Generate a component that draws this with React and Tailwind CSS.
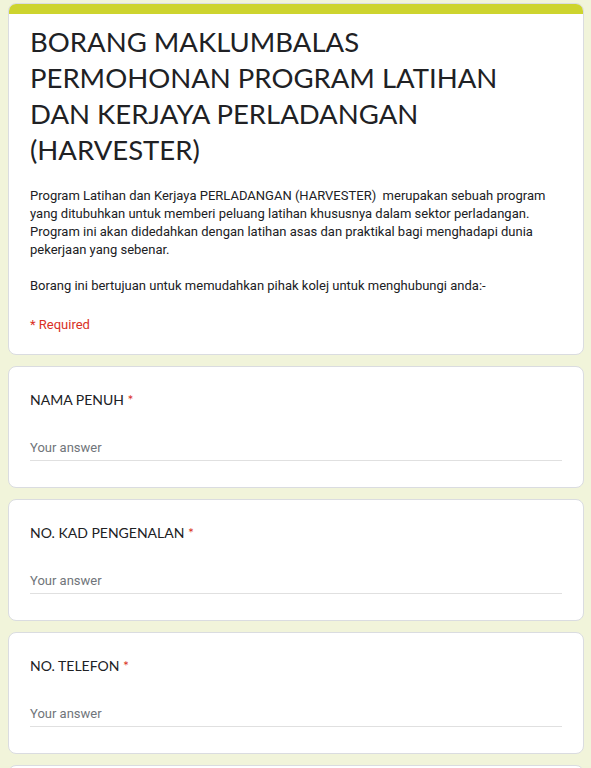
const questions = ["NAMA PENUH", "NO. KAD PENGENALAN", "NO. TELEFON", "ALAMAT"];

const QuestionCard = ({ title }) => (
    <div className="bg-white border border-[#dadce0] rounded-lg px-[21px] pt-[21px] pb-[26px]">
        <div className="text-[14px] leading-[24px] text-[#202124]" style={{ fontFamily: "Lato, 'Open Sans', sans-serif" }}>
            {title} <span className="text-[#d93025]">*</span>
        </div>
        <div className="mt-[26px] border-b border-[#e0e0e0] pb-[2px] text-[13px] leading-[20px] text-[#70757a]">
            Your answer
        </div>
    </div>
)

export default function App() {
    return <div className="min-h-screen bg-[#f1f4da] pl-2 pr-[7px] pt-[3px] flex flex-col gap-[11px]" style={{ fontFamily: "Roboto, 'Liberation Sans', sans-serif" }}>
        <div className="bg-white border border-[#dadce0] rounded-lg overflow-hidden">
            <div className="h-[10px] bg-[#cdd42e]"></div>
            <div className="px-[21px] pt-[10px] pb-[20px]">
                <h1 className="text-[27.5px] leading-[36px] text-[#202124]" style={{ fontFamily: "Lato, 'Open Sans', sans-serif" }}>
                    BORANG MAKLUMBALAS PERMOHONAN PROGRAM LATIHAN DAN KERJAYA PERLADANGAN (HARVESTER)
                </h1>
                <div className="mt-[19px] text-[13px] leading-[18px] text-[#202124] whitespace-pre-line">
                    {"Program Latihan dan Kerjaya PERLADANGAN (HARVESTER)\u00a0 merupakan sebuah program yang ditubuhkan untuk memberi peluang latihan khususnya dalam sektor perladangan. Program ini akan didedahkan dengan latihan asas dan praktikal bagi menghadapi dunia pekerjaan yang sebenar.\n\nBorang ini bertujuan untuk memudahkan pihak kolej untuk menghubungi anda:-"}
                </div>
                <div className="mt-[21px] text-[13px] leading-[18px] text-[#d93025]">* Required</div>
            </div>
        </div>
        {questions.map(q => <QuestionCard key={q} title={q} />)}
    </div>
}
